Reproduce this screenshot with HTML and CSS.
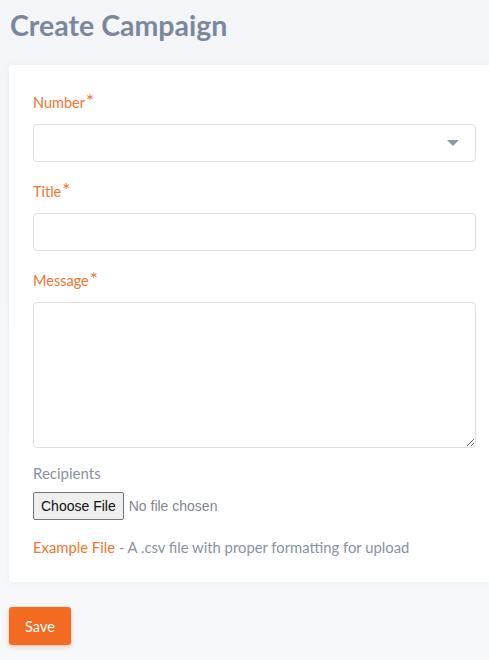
FILE: index.html
```html
<!DOCTYPE html>
<html>
<head>
<meta charset="utf-8">
<link rel="stylesheet" href="styles.css">
</head>
<body>
<div class="page">
  <h1 class="page-title">Create Campaign</h1>
  <div class="card">
    <div class="group">
      <label class="label req">Number<span class="star">*</span></label>
      <div class="select-wrap">
        <select class="control"><option></option></select>
        <span class="caret"></span>
      </div>
    </div>
    <div class="group">
      <label class="label req">Title<span class="star">*</span></label>
      <input class="control" type="text">
    </div>
    <div class="group tight">
      <label class="label req">Message<span class="star">*</span></label>
      <textarea class="control area"></textarea>
    </div>
    <div class="group small">
      <label class="label muted">Recipients</label>
      <input class="file" type="file">
    </div>
    <p class="help"><a class="link">Example File</a> - A .csv file with proper formatting for upload</p>
  </div>
  <button class="btn-save">Save</button>
</div>
</body>
</html>
```
FILE: styles.css
```css
* { box-sizing: border-box; }
html, body { margin: 0; padding: 0; }
body {
  background: linear-gradient(180deg, #f3f5f9 0%, #f6f8fc 100%);
  font-family: "Lato", "Noto Sans", sans-serif;
  width: 489px;
  height: 660px;
  overflow: hidden;
}
.page { padding: 0 0 0 9px; }
.page-title {
  margin: 0;
  padding: 8px 0 0 1px;
  height: 65px;
  font-size: 28.5px;
  font-weight: 700;
  color: #7b889b;
  line-height: 34px;
}
.card {
  background: #fff;
  padding: 27px 13px 24px 24px;
  box-shadow: 0 0 6px rgba(120,130,160,0.08);
  border-radius: 3px 0 0 3px;
}
.group { margin-bottom: 19px; }
.group.tight { margin-bottom: 14px; }
.group.small { margin-bottom: 16px; }
.label {
  display: block;
  font-size: 14.5px;
  line-height: 22px;
  height: 22px;
  margin-bottom: 10px;
}
.req { color: #f3732f; }
.star { font-size: 19px; line-height: 0; vertical-align: 0; margin-left: 1px; }
.muted { color: #8792a3; margin-bottom: 8px; font-size: 15px; }
.control {
  display: block;
  width: 100%;
  height: 38px;
  border: 1px solid #dcdfe4;
  border-radius: 4px;
  background: #fff;
  font-family: inherit;
  font-size: 14px;
  padding: 6px 12px;
  outline: none;
}
select.control { appearance: none; -webkit-appearance: none; }
.select-wrap { position: relative; }
.caret {
  position: absolute;
  right: 17px;
  top: 16px;
  width: 0; height: 0;
  border-left: 6px solid transparent;
  border-right: 6px solid transparent;
  border-top: 6px solid #8c99a3;
}
.area { height: 146px; resize: vertical; }
.file {
  display: block;
  font-family: "Liberation Sans", Arial, sans-serif;
  font-size: 14px;
  color: #80868f;
  height: 28px;
}
.file::file-selector-button {
  font-family: "Liberation Sans", Arial, sans-serif;
  font-size: 14px;
  height: 28px;
  padding: 0 7px;
  margin-right: 5px;
  background: #efefef;
  color: #111;
  border: 1px solid #767676;
  border-radius: 2px;
}
.help {
  margin: 0;
  font-size: 14.8px;
  line-height: 22px;
  color: #8792a3;
}
.link { color: #f3732f; }
.btn-save {
  margin-top: 25px;
  width: 62px;
  height: 38px;
  background: #f26b21;
  color: #fff;
  border: none;
  border-radius: 3px;
  font-family: inherit;
  font-size: 14.5px;
  box-shadow: 0 2px 5px rgba(242,107,33,0.35);
}
```
